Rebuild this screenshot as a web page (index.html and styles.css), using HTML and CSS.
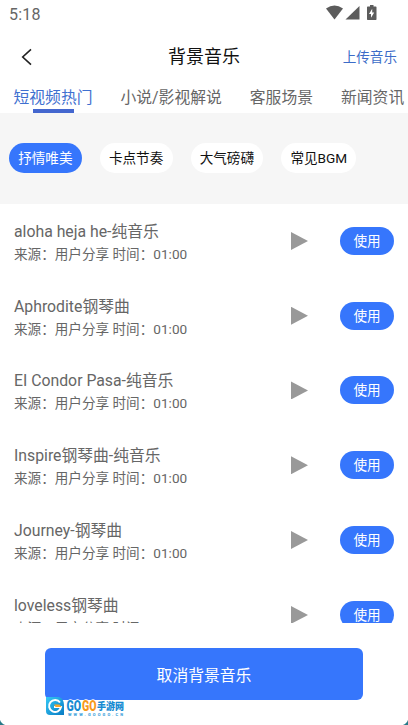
FILE: index.html
```html
<!DOCTYPE html>
<html lang="zh-CN">
<head>
<meta charset="utf-8">
<title>背景音乐</title>
<link rel="stylesheet" href="styles.css">
</head>
<body>
<div class="screen">
  <div class="status">
    <span>5:18</span>
    <svg class="status-icons" width="52" height="16" viewBox="0 0 52 16">
      <path d="M0 3.6Q8.500-2.600 17 3.600L8.500 14.500Z"/>
      <path d="M19.500 14.500L33.500 1V14.500Z"/>
      <path fill-rule="evenodd" d="M44 0h3.500v1.500h2.300q.7 0 .7.700v12.100q0 .7-.7.700h-8.100q-.7 0-.7-.7V2.200q0-.7.7-.7h2.300ZM46.200 3.800L43 9h2v3.800L48.200 7.500h-2Z"/>
    </svg>
  </div>
  <header class="header">
    <svg class="back" width="12" height="18" viewBox="0 0 12 18"><path d="M11 1.300L2.700 9l8.300 7.700"/></svg>
    <h1>背景音乐</h1>
    <a class="upload">上传音乐</a>
  </header>
  <nav class="tabs">
    <span class="tab active">短视频热门</span>
    <span class="tab">小说/影视解说</span>
    <span class="tab">客服场景</span>
    <span class="tab">新闻资讯</span>
  </nav>
  <div class="filters">
    <span class="pill on">抒情唯美</span>
    <span class="pill">卡点节奏</span>
    <span class="pill">大气磅礴</span>
    <span class="pill">常见BGM</span>
  </div>
  <main class="list">
    <div class="row"><div class="info"><div class="name">aloha heja he-纯音乐</div><div class="meta">来源：用户分享 时间：01:00</div></div><i class="play"></i><button class="use">使用</button></div>
    <div class="row"><div class="info"><div class="name">Aphrodite钢琴曲</div><div class="meta">来源：用户分享 时间：01:00</div></div><i class="play"></i><button class="use">使用</button></div>
    <div class="row"><div class="info"><div class="name">EI Condor Pasa-纯音乐</div><div class="meta">来源：用户分享 时间：01:00</div></div><i class="play"></i><button class="use">使用</button></div>
    <div class="row"><div class="info"><div class="name">Inspire钢琴曲-纯音乐</div><div class="meta">来源：用户分享 时间：01:00</div></div><i class="play"></i><button class="use">使用</button></div>
    <div class="row"><div class="info"><div class="name">Journey-钢琴曲</div><div class="meta">来源：用户分享 时间：01:00</div></div><i class="play"></i><button class="use">使用</button></div>
    <div class="row"><div class="info"><div class="name">loveless钢琴曲</div><div class="meta">来源：用户分享 时间：</div></div><i class="play"></i><button class="use">使用</button></div>
  </main>
  <footer class="footer">
    <button class="cancel">取消背景音乐</button>
  </footer>
  <svg class="watermark" width="80" height="20" viewBox="0 0 80 20">
    <defs><linearGradient id="wm" x1="0" y1="0" x2="1" y2="1"><stop offset="0" stop-color="#35c8f5"/><stop offset="1" stop-color="#087bc4"/></linearGradient></defs>
    <path d="M0 0H13Q18 2 18 8V18H4Q0 18 0 14Z" fill="url(#wm)"/>
    <path d="M14 5.500A6 6 0 1 0 15 10H8" fill="none" stroke="#fff" stroke-width="2"/>
    <path d="M8 7.500h5.500l2 2.500h-6Z" fill="#f6a72c"/>
    <g class="brand">
      <text class="go-blue" x="20.500" y="13.500" textLength="14.500" lengthAdjust="spacingAndGlyphs">GO</text>
      <text class="go-orange" x="36" y="13.500" textLength="14.500" lengthAdjust="spacingAndGlyphs">GO</text>
      <text class="site" x="51" y="12.500" textLength="27" lengthAdjust="spacingAndGlyphs">手游网</text>
      <text class="url" x="22" y="18.500" textLength="55">WWW.GOOGO.CN</text>
    </g>
  </svg>
  <i class="corner left"></i>
  <i class="corner right"></i>
</div>
</body>
</html>
```

FILE: styles.css
```css
* { box-sizing: border-box; }
body { margin: 0; background: #fff; font-family: Roboto, "Noto Sans CJK SC", sans-serif; }
button { border: 0; padding: 0; font-family: inherit; color: #fff; background: #3676fc; }
.screen { position: relative; width: 408px; height: 725px; overflow: hidden; display: flex; flex-direction: column; }

.status { height: 30px; padding: 5px 30px 0 9px; display: flex; justify-content: space-between; font-size: 16px; line-height: 20px; letter-spacing: .2px; color: #666; }
.status-icons { fill: #5c5c5c; }

.header { height: 54px; padding: 0 11px 0 20px; display: grid; grid-template-columns: 100px 1fr 109px; align-items: center; }
.back { fill: none; stroke: #222; stroke-width: 1.6; }
h1 { margin: 0; text-align: center; font-size: 18px; line-height: 26px; font-weight: 400; color: #111; }
.upload { margin-top: -2px; text-align: right; font-size: 13.6px; color: #3c6cc8; }

.tabs { height: 29px; padding-left: 13.500px; display: flex; gap: 28px; white-space: nowrap; font-size: 15.8px; line-height: 28px; color: #666; }
.tab { flex: none; }
.tab.active { color: #3f70d0; display: flex; flex-direction: column; align-items: center; }
.tab.active::after { content: ""; width: 41px; height: 4px; margin-top: -3px; background: #4467cf; }

.filters { height: 91px; padding: 30px 9px 0; display: flex; gap: 18px; background: #f6f6f6; }
.pill { height: 30px; padding: 0 9.200px; border-radius: 15px; background: #fff; color: #111; font-size: 13.6px; line-height: 31px; white-space: nowrap; }
.pill.on { background: #3676fc; color: #fff; }

.list { height: 419px; overflow: hidden; }
.row { height: 74.8px; padding: 0 14px; display: flex; align-items: center; }
.info { flex: 1; padding-top: 2px; }
.name { font-size: 15.8px; line-height: 23px; color: #666; }
.meta { font-size: 13.6px; line-height: 22px; color: #666; }
.play { width: 17px; height: 18px; margin: -1px 32px 0 0; background: #999; clip-path: polygon(0 0, 100% 50%, 0 100%); }
.use { width: 54px; height: 28px; margin-top: -1px; border-radius: 14px; font-size: 13.6px; line-height: 28px; }

.footer { padding: 25px 45px 0; }
.cancel { display: block; width: 318px; height: 52px; border-radius: 6px; font-size: 15.8px; }

.watermark { position: absolute; left: 46px; top: 697px; }
.brand { font-weight: 900; }
.go-blue { font-size: 14px; fill: #168bd2; stroke: #fff; stroke-width: 1.5px; paint-order: stroke; }
.go-orange { font-size: 14px; fill: #f79a1b; stroke: #fff; stroke-width: 1.5px; paint-order: stroke; }
.site { font-size: 10px; fill: #168bd2; stroke: #fff; stroke-width: 1px; paint-order: stroke; }
.url { font-size: 4px; fill: #47a5dc; }

.corner { position: absolute; bottom: 0; width: 8px; height: 8px; }
.corner.left { left: 0; background: radial-gradient(circle at 100% 0, transparent 8px, #287a88 9px); }
.corner.right { right: 0; background: radial-gradient(circle at 0 0, transparent 8px, #287a88 9px); }
```
